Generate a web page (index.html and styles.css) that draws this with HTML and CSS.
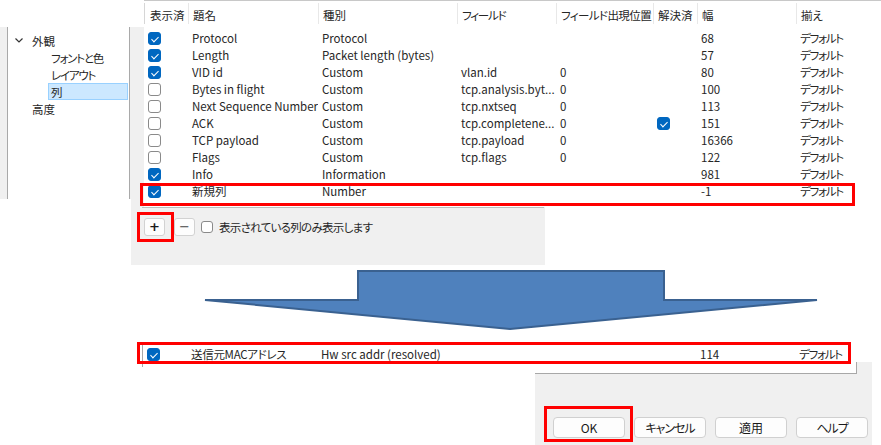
FILE: index.html
```html
<!DOCTYPE html>
<html lang="ja">
<head>
    <meta charset="UTF-8">
    <title>列の設定</title>
    <link rel="stylesheet" href="styles.css">
</head>
<body>
<div class="canvas">

    <!-- 左のツリー -->
    <div class="shot tree-shot">
        <div class="tree">
            <div class="tree-item lvl1">
                <svg class="chev" width="8" height="5" viewBox="0 0 8 5"><polyline points="0.5,0.5 4,4 7.5,0.5" fill="none" stroke="#333" stroke-width="1.2"/></svg>
                外観
            </div>
            <div class="tree-item lvl2 kana">フォントと色</div>
            <div class="tree-item lvl2 kana">レイアウト</div>
            <div class="tree-item lvl2 selected">列</div>
            <div class="tree-item lvl1 leaf">高度</div>
        </div>
    </div>

    <!-- 下のツールバー -->
    <div class="shot foot-shot">
        <div class="foot-edge"></div>
        <div class="toolbar">
            <button class="tool-btn plus">+</button>
            <button class="tool-btn minus">−</button>
            <span class="cb"></span>
            <span class="tool-label">表示されている列のみ表示します</span>
        </div>
    </div>

    <!-- 列の一覧 -->
    <div class="shot list-shot">
        <div class="row head">
            <div class="cell first">表示済</div>
            <div class="cell">題名</div>
            <div class="cell">種別</div>
            <div class="cell kana">フィールド</div>
            <div class="cell tight">フィールド出現位置</div>
            <div class="cell">解決済</div>
            <div class="cell">幅</div>
            <div class="cell">揃え</div>
        </div>
        <div class="rows">
            <div class="row">
                <div class="cell"><span class="cb on"></span></div>
                <div class="cell">Protocol</div>
                <div class="cell">Protocol</div>
                <div class="cell"></div>
                <div class="cell"></div>
                <div class="cell"></div>
                <div class="cell">68</div>
                <div class="cell kana">デフォルト</div>
            </div>
            <div class="row">
                <div class="cell"><span class="cb on"></span></div>
                <div class="cell">Length</div>
                <div class="cell">Packet length (bytes)</div>
                <div class="cell"></div>
                <div class="cell"></div>
                <div class="cell"></div>
                <div class="cell">57</div>
                <div class="cell kana">デフォルト</div>
            </div>
            <div class="row">
                <div class="cell"><span class="cb on"></span></div>
                <div class="cell">VID id</div>
                <div class="cell">Custom</div>
                <div class="cell">vlan.id</div>
                <div class="cell">0</div>
                <div class="cell"></div>
                <div class="cell">80</div>
                <div class="cell kana">デフォルト</div>
            </div>
            <div class="row">
                <div class="cell"><span class="cb"></span></div>
                <div class="cell">Bytes in flight</div>
                <div class="cell">Custom</div>
                <div class="cell">tcp.analysis.byt...</div>
                <div class="cell">0</div>
                <div class="cell"></div>
                <div class="cell">100</div>
                <div class="cell kana">デフォルト</div>
            </div>
            <div class="row">
                <div class="cell"><span class="cb"></span></div>
                <div class="cell">Next Sequence Number</div>
                <div class="cell">Custom</div>
                <div class="cell">tcp.nxtseq</div>
                <div class="cell">0</div>
                <div class="cell"></div>
                <div class="cell">113</div>
                <div class="cell kana">デフォルト</div>
            </div>
            <div class="row">
                <div class="cell"><span class="cb"></span></div>
                <div class="cell">ACK</div>
                <div class="cell">Custom</div>
                <div class="cell">tcp.completene...</div>
                <div class="cell">0</div>
                <div class="cell"><span class="cb on"></span></div>
                <div class="cell">151</div>
                <div class="cell kana">デフォルト</div>
            </div>
            <div class="row">
                <div class="cell"><span class="cb"></span></div>
                <div class="cell">TCP payload</div>
                <div class="cell">Custom</div>
                <div class="cell">tcp.payload</div>
                <div class="cell">0</div>
                <div class="cell"></div>
                <div class="cell">16366</div>
                <div class="cell kana">デフォルト</div>
            </div>
            <div class="row">
                <div class="cell"><span class="cb"></span></div>
                <div class="cell">Flags</div>
                <div class="cell">Custom</div>
                <div class="cell">tcp.flags</div>
                <div class="cell">0</div>
                <div class="cell"></div>
                <div class="cell">122</div>
                <div class="cell kana">デフォルト</div>
            </div>
            <div class="row">
                <div class="cell"><span class="cb on"></span></div>
                <div class="cell">Info</div>
                <div class="cell">Information</div>
                <div class="cell"></div>
                <div class="cell"></div>
                <div class="cell"></div>
                <div class="cell">981</div>
                <div class="cell kana">デフォルト</div>
            </div>
            <div class="row">
                <div class="cell"><span class="cb on"></span></div>
                <div class="cell">新規列</div>
                <div class="cell">Number</div>
                <div class="cell"></div>
                <div class="cell"></div>
                <div class="cell"></div>
                <div class="cell">-1</div>
                <div class="cell kana">デフォルト</div>
            </div>
        </div>
    </div>

    <!-- 矢印 -->
    <svg class="shot arrow" width="881" height="445" viewBox="0 0 881 445">
        <polygon points="358,271 664,271 664,300 817,300 510,329 205,300 358,300"
                 fill="#4f81bd" stroke="#3a6190" stroke-width="2" stroke-linejoin="miter"/>
    </svg>

    <!-- 変更後の行 -->
    <div class="shot mac-shot">
        <div class="row">
            <div class="cell"><span class="cb on"></span></div>
            <div class="cell mac-title">送信元MACアドレス</div>
            <div class="cell">Hw src addr (resolved)</div>
            <div class="cell"></div>
            <div class="cell"></div>
            <div class="cell"></div>
            <div class="cell">114</div>
            <div class="cell kana">デフォルト</div>
        </div>
    </div>

    <!-- ダイアログのボタン -->
    <div class="shot dialog-shot">
        <div class="dialog-edge"></div>
        <div class="dialog-buttons">
            <button class="btn">OK</button>
            <button class="btn kana">キャンセル</button>
            <button class="btn">適用</button>
            <button class="btn kana">ヘルプ</button>
        </div>
    </div>

    <!-- 赤枠 -->
    <div class="mark mark-new"></div>
    <div class="mark mark-plus"></div>
    <div class="mark mark-mac"></div>
    <div class="mark mark-ok"></div>
</div>
</body>
</html>
```

FILE: styles.css
```css
* {
    box-sizing: border-box;
}

body {
    margin: 0;
    background: #fff;
    font-family: "Noto Sans CJK JP", "Noto Sans", sans-serif;
    font-size: 11.5px;
    color: #262626;
    font-feature-settings: "palt";
}

.canvas {
    position: relative;
    width: 881px;
    height: 445px;
    overflow: hidden;
}

/* katakana runs are set tighter in the original UI font */
.kana {
    letter-spacing: -1.2px;
}

/* collage pieces */
.shot {
    position: absolute;
}

/* tree */
.tree-shot {
    left: 0;
    top: 27px;
    width: 144px;
    height: 172px;
    background: #f0f0f0;
}

.tree {
    margin-left: 7px;
    width: 123px;
    height: 100%;
    background: #fff;
    border-left: 1px solid #a9a9a9;
    border-right: 1px solid #a9a9a9;
    padding-top: 5px;
}

.tree-item {
    height: 17px;
    line-height: 16px;
    display: flex;
    align-items: center;
    border: 1px solid transparent;
    white-space: nowrap;
}

.tree-item.lvl1 {
    padding-left: 6px;
}

.tree-item.lvl1.leaf {
    padding-left: 23px;
}

.chev {
    margin-right: 9px;
}

.tree-item.lvl2 {
    margin-left: 40px;
    margin-right: 1px;
    padding-left: 2px;
}

.tree-item.selected {
    background: #cce8ff;
    border-color: #99d1ff;
}

/* column list */
.list-shot {
    left: 144px;
    top: 0;
    width: 737px;
    height: 207px;
    background: #fff;
    border-top: 1px solid #c8c8c8;
}

.row {
    display: grid;
    grid-template-columns: 44px 130px 139px 99px 97px 44px 99px 85px;
    height: 17px;
    line-height: 17px;
}

.row .cell {
    padding-left: 4px;
    white-space: nowrap;
    overflow: hidden;
    display: flex;
    align-items: center;
}

.row.head {
    height: 21px;
    margin-top: 2px;
    border-left: 1px solid #d6d6d6;
}

.row.head .cell {
    border-right: 1px solid #e8e8e8;
    line-height: 24px;
    align-items: flex-start;
}

.row.head .cell.first {
    padding-left: 5px;
}

.row.head .cell.tight {
    letter-spacing: -0.6px;
}

.rows {
    padding-top: 6px;
}

.mac-title {
    letter-spacing: -0.3px;
}

/* checkbox */
.cb {
    display: inline-block;
    position: relative;
    width: 13px;
    height: 13px;
    border: 1px solid #8a8a8a;
    border-radius: 3px;
    background: #fff;
    flex-shrink: 0;
}

.cb.on {
    background: #0067c0;
    border-color: #0067c0;
}

.cb.on::after {
    content: "";
    position: absolute;
    left: 4px;
    top: 2px;
    width: 3px;
    height: 6px;
    border-right: 1.2px solid #fff;
    border-bottom: 1.2px solid #fff;
    transform: rotate(45deg);
}

/* toolbar under list */
.foot-shot {
    left: 131px;
    top: 199px;
    width: 414px;
    height: 66px;
    background: #f0f0f0;
    padding-top: 8px;
}

.foot-edge {
    margin-left: 11px;
    margin-right: 1px;
    border-top: 1px solid #bdbdbd;
}

.toolbar {
    display: flex;
    align-items: center;
    padding-left: 13px;
    margin-top: 10px;
}

.tool-btn {
    width: 21px;
    height: 18px;
    padding: 0;
    border: 1px solid #d2d2d2;
    border-radius: 3px;
    background: #fdfdfd;
    font-family: "DejaVu Sans", sans-serif;
    font-size: 13px;
    line-height: 14px;
    color: #1a1a1a;
    margin-right: 9px;
}

.tool-btn.plus {
    font-weight: bold;
}

.tool-btn.minus {
    margin-right: 6px;
    color: #444;
}

.toolbar .cb {
    width: 12px;
    height: 12px;
    margin-right: 6px;
}

.tool-label {
    white-space: nowrap;
    font-size: 11.5px;
    letter-spacing: -0.7px;
}

/* arrow */
.arrow {
    left: 0;
    top: 0;
}

/* new row */
.mac-shot {
    left: 142px;
    top: 342px;
    width: 714px;
    height: 25px;
    background: #fff;
    border-left: 1px solid #a8a8a8;
    padding-top: 4px;
}

/* dialog bottom */
.dialog-shot {
    left: 535px;
    top: 362px;
    width: 337px;
    height: 83px;
    background: #f0f0f0;
}

.dialog-edge {
    width: 322px;
    height: 12px;
    background: #fff;
    border-right: 1px solid #a8a8a8;
    border-bottom: 1px solid #a8a8a8;
}

.dialog-buttons {
    display: flex;
    gap: 9px;
    padding-left: 18px;
    margin-top: 43px;
}

.btn {
    width: 72px;
    height: 21px;
    padding: 0;
    border: 1px solid #d0d0d0;
    border-radius: 4px;
    background: #fdfdfd;
    font-family: inherit;
    font-feature-settings: "palt";
    font-size: 12px;
    color: #1a1a1a;
}

.btn.kana {
    letter-spacing: -1px;
}

/* red highlight frames */
.mark {
    position: absolute;
    border: 3px solid #ff0000;
}

.mark-new {
    left: 140px;
    top: 183px;
    width: 715px;
    height: 23px;
}

.mark-plus {
    left: 137px;
    top: 212px;
    width: 37px;
    height: 30px;
}

.mark-mac {
    left: 137px;
    top: 342px;
    width: 714px;
    height: 22px;
}

.mark-ok {
    left: 544px;
    top: 406px;
    width: 89px;
    height: 36px;
}
```
